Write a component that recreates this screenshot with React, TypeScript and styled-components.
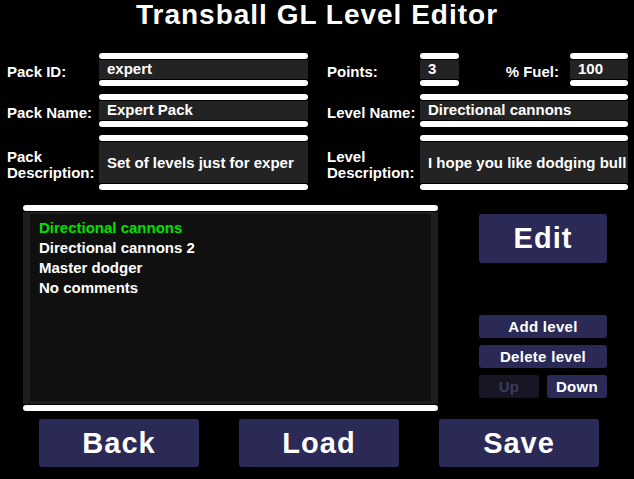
import styled, { createGlobalStyle } from 'styled-components';

const GlobalStyle = createGlobalStyle`
  html, body {
    margin: 0;
    padding: 0;
    background: #000;
  }
  body {
    font-family: "Liberation Sans", Arial, sans-serif;
    font-weight: 700;
    color: #fff;
  }
`;

const Screen = styled.div`
  width: 634px;
  height: 479px;
  background: #000;
  display: flex;
  flex-direction: column;
  overflow: hidden;
`;

const Title = styled.h1`
  margin: 0;
  height: 34px;
  line-height: 29px;
  font-size: 28px;
  letter-spacing: 1px;
  text-align: center;
  color: #fff;
`;

const Form = styled.div`
  margin-top: 19px;
  padding: 0 6px 0 7px;
  display: grid;
  grid-template-columns: 301px 301px;
  column-gap: 19px;
`;

const Column = styled.div`
  display: flex;
  flex-direction: column;
  gap: 8px;
`;

const Row = styled.div`
  display: flex;
  align-items: center;
`;

const Label = styled.div<{ $width?: number; $right?: boolean }>`
  width: ${(p) => (p.$width ? `${p.$width}px` : 'auto')};
  flex: ${(p) => (p.$width ? 'none' : '1')};
  text-align: ${(p) => (p.$right ? 'right' : 'left')};
  padding-right: ${(p) => (p.$right ? '11px' : '0')};
  padding-top: 4px;
  font-size: 15px;
  line-height: 16px;
  white-space: nowrap;
  color: #fff;
`;

const LabelLine = styled.span`
  display: block;
`;

const Field = styled.div<{ $width?: number }>`
  width: ${(p) => (p.$width ? `${p.$width}px` : 'auto')};
  flex: ${(p) => (p.$width ? 'none' : '1')};
  display: flex;
  flex-direction: column;
  gap: 1px;
  min-width: 0;
`;

const Bar = styled.div`
  height: 6px;
  background: #fff;
  border-radius: 3px;
`;

const FieldBox = styled.div<{ $tall?: boolean }>`
  height: ${(p) => (p.$tall ? '41px' : '19px')};
  background: #232323;
  display: flex;
  align-items: ${(p) => (p.$tall ? 'center' : 'flex-start')};
  padding: 0 0 0 8px;
  overflow: hidden;
  white-space: nowrap;
  font-size: 15px;
  line-height: 17px;
  color: #fff;
`;

const Middle = styled.div`
  margin-top: 15px;
  padding-left: 23px;
  display: flex;
  gap: 41px;
`;

const ListWrap = styled.div`
  width: 415px;
  display: flex;
  flex-direction: column;
  gap: 1px;
`;

const ListFrame = styled.div`
  height: 192px;
  background: #1e1e1e;
  padding: 2px 7px 3px 7px;
  box-sizing: border-box;
  display: flex;
`;

const ListInner = styled.div`
  flex: 1;
  background: #101010;
  padding: 4px 9px;
  display: flex;
  flex-direction: column;
`;

const ListItem = styled.div<{ $selected?: boolean }>`
  height: 20px;
  line-height: 20px;
  font-size: 15px;
  color: ${(p) => (p.$selected ? '#00e000' : '#fff')};
`;

const Side = styled.div`
  width: 128px;
  display: flex;
  flex-direction: column;
  gap: 7px;
`;

const Button = styled.div<{ $big?: boolean; $disabled?: boolean; $height?: number }>`
  width: 100%;
  height: ${(p) => p.$height ?? 23}px;
  border-radius: 3px;
  background: ${(p) => (p.$disabled ? '#161624' : '#2b2a56')};
  color: ${(p) => (p.$disabled ? '#3c3c58' : '#fff')};
  display: flex;
  align-items: center;
  justify-content: center;
  font-size: ${(p) => (p.$big ? '29px' : '15px')};
  letter-spacing: ${(p) => (p.$big ? '1px' : '0.3px')};
  flex: none;
`;

const EditSlot = styled.div`
  margin-top: 9px;
  margin-bottom: 45px;
`;

const SmallRow = styled.div`
  display: flex;
  gap: 8px;
`;

const SmallSlot = styled.div<{ $width: number }>`
  width: ${(p) => p.$width}px;
`;

const Bottom = styled.div`
  margin-top: 8px;
  padding-left: 39px;
  display: flex;
  gap: 40px;
`;

const BottomSlot = styled.div`
  width: 160px;
`;

function TextField({ value, width, tall }: { value: string; width?: number; tall?: boolean }) {
  return (
    <Field $width={width}>
      <Bar />
      <FieldBox $tall={tall}>{value}</FieldBox>
      <Bar />
    </Field>
  );
}

const levels = ['Directional cannons', 'Directional cannons 2', 'Master dodger', 'No comments'];

export default function App() {
  return (
    <>
      <GlobalStyle />
      <Screen>
        <Title>Transball GL Level Editor</Title>
        <Form>
          <Column>
            <Row>
              <Label $width={92}>Pack ID:</Label>
              <TextField value="expert" />
            </Row>
            <Row>
              <Label $width={92}>Pack Name:</Label>
              <TextField value="Expert Pack" />
            </Row>
            <Row>
              <Label $width={92}>
                <LabelLine>Pack</LabelLine>
                <LabelLine>Description:</LabelLine>
              </Label>
              <TextField value="Set of levels just for exper" tall />
            </Row>
          </Column>
          <Column>
            <Row>
              <Label $width={93}>Points:</Label>
              <TextField value="3" width={39} />
              <Label $right>% Fuel:</Label>
              <TextField value="100" width={58} />
            </Row>
            <Row>
              <Label $width={93}>Level Name:</Label>
              <TextField value="Directional cannons" />
            </Row>
            <Row>
              <Label $width={93}>
                <LabelLine>Level</LabelLine>
                <LabelLine>Description:</LabelLine>
              </Label>
              <TextField value="I hope you like dodging bull" tall />
            </Row>
          </Column>
        </Form>
        <Middle>
          <ListWrap>
            <Bar />
            <ListFrame>
              <ListInner>
                {levels.map((l, i) => (
                  <ListItem key={l} $selected={i === 0}>
                    {l}
                  </ListItem>
                ))}
              </ListInner>
            </ListFrame>
            <Bar />
          </ListWrap>
          <Side>
            <EditSlot>
              <Button $big $height={49}>
                Edit
              </Button>
            </EditSlot>
            <Button>Add level</Button>
            <Button>Delete level</Button>
            <SmallRow>
              <SmallSlot $width={60}>
                <Button $disabled>Up</Button>
              </SmallSlot>
              <SmallSlot $width={60}>
                <Button>Down</Button>
              </SmallSlot>
            </SmallRow>
          </Side>
        </Middle>
        <Bottom>
          <BottomSlot>
            <Button $big $height={48}>
              Back
            </Button>
          </BottomSlot>
          <BottomSlot>
            <Button $big $height={48}>
              Load
            </Button>
          </BottomSlot>
          <BottomSlot>
            <Button $big $height={48}>
              Save
            </Button>
          </BottomSlot>
        </Bottom>
      </Screen>
    </>
  );
}
